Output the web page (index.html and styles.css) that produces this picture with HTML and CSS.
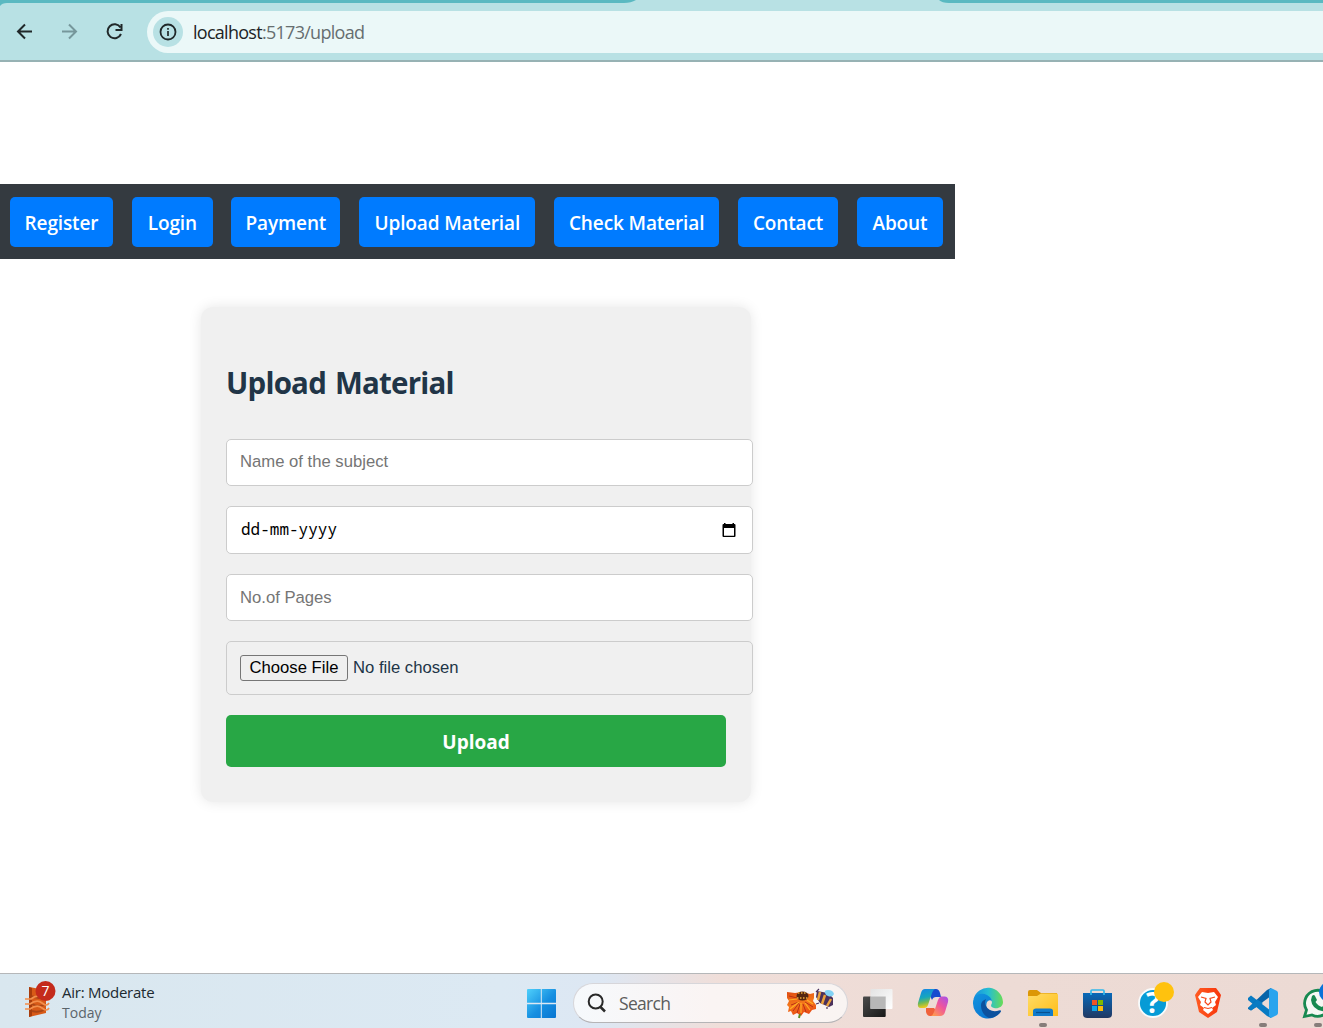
FILE: index.html
```html
<!DOCTYPE html>
<html lang="en">
<head>
<meta charset="utf-8">
<title>Upload Material</title>
<link rel="stylesheet" href="styles.css">
</head>
<body>
<header class="browser">
  <div class="tabs">
    <svg width="1323" height="10" viewBox="0 0 1323 10"><path fill="#5ab9c1" d="M0 0H636Q631 3 624 3H7Q2 3 0 6ZM939 0H1323V3H949Q942 3 939 0Z"/></svg>
  </div>
  <svg class="tools" width="147" height="50" viewBox="0 0 147 50" fill="none" stroke="#202829" stroke-width="2">
    <path d="M32 21.5H18M25 14.5L18 21.5L25 28.5"/>
    <path stroke="#76979b" d="M62 21.5H76M69 14.5L76 21.5L69 28.5"/>
    <path d="M120.5 17.5A7 7 0 1 0 121 24M121.5 14V20H115.500"/>
  </svg>
  <div class="address">
    <span class="info"><svg width="30" height="30" viewBox="0 0 30 30"><circle cx="15" cy="15" r="7.500" fill="none" stroke="#202829" stroke-width="1.800"/><path d="M15 14V19M15 11V12.700" stroke="#202829" stroke-width="1.700"/></svg></span>
    <span class="url"><b>localhost</b>:5173/upload</span>
  </div>
</header>
<main class="page">
  <nav class="nav">
    <a class="link register">Register</a>
    <a class="link login">Login</a>
    <a class="link payment">Payment</a>
    <a class="link upload">Upload Material</a>
    <a class="link check">Check Material</a>
    <a class="link contact">Contact</a>
    <a class="link about">About</a>
  </nav>
  <form class="card">
    <h1 class="title">Upload Material</h1>
    <input class="field" type="text" placeholder="Name of the subject">
    <div class="field date"><span>dd-mm-yyyy</span>
      <svg width="14" height="15" viewBox="0 0 14 15"><path fill="#000" fill-rule="evenodd" d="M2 0H3.500V1H10.500V0H12V1H12.500Q13.500 1 13.500 2V13Q13.500 14 12.500 14H1.500Q.5 14 .5 13V2Q.5 1 1.500 1H2ZM2 5V12.700H12V5Z"/></svg>
    </div>
    <input class="field pages" type="text" placeholder="No.of Pages">
    <div class="field file"><span class="choose">Choose File</span><span>No file chosen</span></div>
    <button class="submit" type="button">Upload</button>
  </form>
</main>
<footer class="taskbar">
  <div class="weather">
    <svg width="34" height="42" viewBox="0 0 34 42">
      <path fill="#d85a17" d="M6 8L23 11V34L6 38Z"/><path fill="#a83c0b" d="M6 8L9 9V37L6 38Z"/>
      <path fill="none" stroke="#a94616" stroke-width="2" d="M9 17Q16 21 23 17M9 25Q16 29 23 25M9 32Q16 34 23 30"/>
      <path fill="none" stroke="#f38f4b" stroke-width="1.700" d="M2 20H8Q14 15 20 19T27 19M2 25H7Q14 20 19 24T26 24M2 30H7Q14 25 19 29T26 29"/>
      <circle cx="22.500" cy="12" r="10" fill="#c42b1c"/>
      <text x="22.500" y="17" text-anchor="middle" fill="#fff" font-family="Open Sans, sans-serif" font-size="14">7</text>
    </svg>
    <div class="forecast"><span class="air">Air: Moderate</span><span class="today">Today</span></div>
  </div>
  <svg class="start" width="29" height="29" viewBox="0 0 29 29">
    <defs><linearGradient id="win" x2="1" y2="1"><stop stop-color="#4fd0fb"/><stop offset=".55" stop-color="#168fe1"/><stop offset="1" stop-color="#0875d1"/></linearGradient></defs>
    <path fill="url(#win)" d="M1 0H13.800V13.800H0V1Q0 0 1 0ZM14.800 0H28Q29 0 29 1V13.800H14.800ZM0 15.200H13.800V29H1Q0 29 0 28ZM14.800 15.200H29V28Q29 29 28 29H14.800Z"/>
  </svg>
  <div class="search">
    <svg width="20" height="20" viewBox="0 0 20 20" fill="none" stroke="#292929"><circle cx="8.700" cy="8.500" r="7" stroke-width="2"/><path d="M13.500 14L18 18.500" stroke-width="2.500"/></svg>
    <span class="hint">Search</span>
    <svg class="flower" width="50" height="32" viewBox="0 0 50 32">
      <defs><linearGradient id="petal" x2=".3" y2="1"><stop stop-color="#df4b12"/><stop offset=".55" stop-color="#f4781b"/><stop offset="1" stop-color="#e94b12"/></linearGradient></defs>
      <path fill="url(#petal)" d="M2 5L10 6L17 5L25 7L29 6L29 11L28 14L31 18L31 22L27 23L24 27L19 25L16 29L12 26L8 28L6 24L3 25L4 20L2 18L4 14L2 11Z"/>
      <path fill="none" stroke="#b92f16" d="M14 15L6 18M14 16L8 24M15 17L12 26M18 17L21 25M20 15L28 20M12 11L4 9"/>
      <path fill="none" stroke="#ffad24" stroke-width="1.200" d="M14 15L5 22M16 16L16 26M20 16L25 23M12 12L4 13M22 13L28 17"/>
      <ellipse cx="17.500" cy="9" rx="6" ry="4.500" fill="#562710"/><path stroke="#edaa3a" stroke-width="1.300" stroke-dasharray="1.500 1.500" d="M13 6H22M12 11H23"/>
      <path stroke="#5e8c23" stroke-width="2" d="M15 27L14 31"/>
      <path fill="#4a315c" d="M32 4L43 6L48 11L48 18L44 20L35 16L31 10Z"/>
      <path stroke="#eca23a" stroke-width="2.500" d="M35 5L33 13M40 8L37 17M46 12L42 19"/>
      <path fill="#83d3f5" d="M40 6Q39 3 43 3Q48 3 49 7Q48 10 44 9.500L41 8Z"/>
      <path stroke="#4a315c" stroke-width="1.200" d="M31 5L34 2M34 16L31 17M42 20L42 22"/>
    </svg>
  </div>
  <div class="apps">
    <svg viewBox="0 0 55 54"><defs><linearGradient id="dark" x2="1" y2="1"><stop stop-color="#4b4b4b"/><stop offset="1" stop-color="#181818"/></linearGradient><linearGradient id="light" x2="1" y2="1"><stop stop-color="#e3e3e3"/><stop offset="1" stop-color="#fff"/></linearGradient></defs><rect x="13" y="22.500" width="22.700" height="20.500" rx="1" fill="url(#dark)"/><rect x="20.500" y="15" width="22" height="20" rx="1" fill="url(#light)"/><path fill="#b8b8b8" d="M20.500 22.500H35.700V35H20.500Z"/></svg>
    <svg viewBox="0 0 55 54"><defs><linearGradient id="cpA" x2=".2" y2="1"><stop stop-color="#1584e8"/><stop offset=".5" stop-color="#16a7bd"/><stop offset=".75" stop-color="#72b957"/><stop offset="1" stop-color="#edc91c"/></linearGradient><linearGradient id="cpB" x1="1" x2=".2" y2="1"><stop stop-color="#a451ed"/><stop offset=".5" stop-color="#ee559d"/><stop offset="1" stop-color="#ff9851"/></linearGradient></defs>
      <path fill="#174bcf" d="M22 15H31Q34 15 35 19L36 23H31Q28 23 27 26Z"/><path fill="#f0613a" d="M21 34H29L33 39Q32 42 28 42H25Q22 42 21 38Z"/>
      <path fill="url(#cpA)" d="M20 15H30Q28 16 27 19L23 31Q22 34 19 34H16Q12 34 13 29L16 19Q17 15 20 15Z"/><path fill="url(#cpB)" d="M36 22.500H40Q44 23 43 28L40 38Q39 42 35 42H26Q28 41 29 38L33 26Q34 23 36 22.500Z"/></svg>
    <svg viewBox="0 0 55 54"><defs><linearGradient id="edA" x2="1"><stop stop-color="#168ee0"/><stop offset=".5" stop-color="#25bdd4"/><stop offset="1" stop-color="#69dc55"/></linearGradient><linearGradient id="edB" x2=".7" y2="1"><stop stop-color="#1294df"/><stop offset="1" stop-color="#0872cf"/></linearGradient></defs>
      <path fill="url(#edA)" d="M13.500 25A15 15 0 0 1 43 28C43 33 38 35 34 34C30 33 31 31 32 29C32 23 25 20 13.500 25Z"/><path fill="url(#edB)" d="M13 29C13 21 21 18 27 21Q31 23 32 27Q29 25 27 28C24 36 31 40 41 37A15 15 0 0 1 13 29Z"/><path fill="#0c519e" d="M21 31Q21 27 26 25Q24 29 26 32Q29 38 37 37Q43 35 40 39Q35 44 29 44C23 41 21 36 21 31Z"/></svg>
    <svg viewBox="0 0 55 54"><defs><linearGradient id="fold" x2="1" y2="1"><stop stop-color="#ffdc66"/><stop offset="1" stop-color="#ffbd18"/></linearGradient></defs><path fill="#dc9706" d="M13 18Q13 16 15 16H22L26 19H42V25H13Z"/><path fill="url(#fold)" d="M13 22H22L26 19.500H42Q43 19.500 43 21V42H13Z"/><path fill="#117bcb" d="M18 42V37Q18 34.500 21 34.500H35Q38 34.500 38 37V42Z"/><path stroke="#075191" stroke-width="1.200" d="M21 38.500H35"/><rect class="running" x="24" y="49" width="8" height="4" rx="2"/></svg>
    <svg viewBox="0 0 55 54"><defs><linearGradient id="shop" x2="0" y2="1"><stop stop-color="#0869b9"/><stop offset="1" stop-color="#213862"/></linearGradient></defs><path fill="url(#shop)" d="M13 19H42V40Q42 44 38 44H17Q13 44 13 40Z"/><path fill="none" stroke="#31b8ec" stroke-width="1.700" d="M21 21V17Q21 16 22 16H33Q34 16 34 17V21"/><path fill="#f35325" d="M22 26H27V31H22Z"/><path fill="#7eba00" d="M28 26H33V31H28Z"/><path fill="#10a4e8" d="M22 32H27V37H22Z"/><path fill="#ffbb09" d="M28 32H33V37H28Z"/></svg>
    <svg viewBox="0 0 55 54"><circle cx="28" cy="29" r="14" fill="#079bd6" stroke="#f8fbfc" stroke-width="1.800"/><text x="28" y="39" text-anchor="middle" font-family="Open Sans, sans-serif" font-size="29" font-weight="700" fill="#fff">?</text><circle cx="39" cy="18" r="10" fill="#ffc20e"/></svg>
    <svg viewBox="0 0 55 54"><defs><linearGradient id="brave" x2="1"><stop stop-color="#ff5b22"/><stop offset="1" stop-color="#f8350b"/></linearGradient></defs><path fill="url(#brave)" d="M20 14H36L39 18L41 21L40 25L37 38L28 44L19 38L16 25L15 21L17 18Z"/><path fill="#fff" d="M22 18L28 19L34 18L38 23L35 28L36 31L32 34L33 36L28 40L23 36L24 34L20 31L21 28L18 23Z"/><path fill="none" stroke="#f6471a" stroke-width="1.200" d="M21 23L26 24.500L25 28L28 31L31 28L30 24.500L35 23M24 33.500L28 34.500L32 33.500"/></svg>
    <svg viewBox="0 0 55 54"><path fill="#087bc3" d="M13 24L16 21.500L36 37V44L32 42L13 26Z"/><path fill="#0864a9" d="M13 34L32 16L36 14V22L16 36.500L13 35Z"/><path fill="#087bc3" d="M13 34L22 25.500L28 29L16 36.500Z"/><path fill="#29a4ee" d="M36 14L42 17Q43 18 43 19V39Q43 40 42 41L36 44L34 42V16Z"/><rect class="running" x="24" y="49" width="8" height="4" rx="2"/></svg>
    <svg viewBox="0 0 55 54"><path fill="#f6f8f4" stroke="#178950" stroke-width="2.800" d="M14.500 42.500L16.500 36A13 13 0 1 1 22 41Z"/><path fill="#178950" d="M22 22Q24 20 25 22L27 26L25.500 28Q28 32 32 33L34 31L38 33Q37 38 32 37Q22 35 21 26Z"/><circle cx="39" cy="18" r="10" fill="#0b72d9"/><rect class="running" x="24" y="49" width="8" height="4" rx="2"/></svg>
  </div>
</footer>
</body>
</html>
```
FILE: styles.css
```css
* { box-sizing: border-box; }
body { margin: 0; height: 1028px; overflow: hidden; display: flex; flex-direction: column; background: #fff; font-family: "Open Sans", "Noto Sans", sans-serif; }
svg { display: block; flex-shrink: 0; }
.browser { height: 62px; flex-shrink: 0; display: grid; grid-template: 10px 50px / 147px 1fr; background: #b8e1e4; border-bottom: 2px solid #97b2b4; }
.tabs { grid-column: 1 / 3; width: 1323px; }
.address { margin-top: 1px; height: 42px; padding-left: 6px; display: flex; align-items: center; border-radius: 21px 0 0 21px; background: #ebf8f8; }
.info { width: 30px; height: 30px; border-radius: 50%; background: #b8e1e4; }
.url { margin-left: 10px; color: #666e70; font: 18px/24px "Open Sans", sans-serif; letter-spacing: -.72px; }
.url b { font-weight: 400; color: #202425; }
.page { flex: 1; padding-top: 122px; }
.nav { width: 955px; height: 75px; padding: 13px 12px 12px 10px; display: flex; justify-content: space-between; background: #343a40; }
.link { height: 50px; border-radius: 5px; background: #007bff; color: #fff; font-size: 19px; font-weight: 600; line-height: 53px; text-align: center; white-space: nowrap; letter-spacing: -.12px; }
.register { width: 103px; }
.login { width: 81px; margin-right: -.4px; }
.payment { width: 109px; }
.upload { width: 176px; }
.check { width: 165px; }
.contact { width: 100px; }
.about { width: 86px; }
.card { width: 550px; height: 495px; margin: 48px 0 0 201px; padding: 53px 25px 35px; display: flex; flex-direction: column; gap: 20px; border-radius: 12px; background: #f0f0f0; box-shadow: 0 0 13px rgba(0, 0, 0, .1); }
.title { height: 59px; margin: 0; color: #213547; font-size: 29.5px; font-weight: 700; line-height: 45px; letter-spacing: -.78px; word-spacing: 2px; white-space: nowrap; }
.field { width: 527px; height: 47px; flex-shrink: 0; padding: 0 13px; border: 1px solid #ccc; border-radius: 5px; outline: 0; background: #fff; font: 16.67px "Liberation Sans", Arial, sans-serif; }
.field::placeholder { color: #757575; opacity: 1; }
input.field { padding-bottom: 2px; }
input.pages { padding-bottom: 0; }
.date { height: 48px; padding: 0 16px 0 14px; display: flex; align-items: center; justify-content: space-between; font: 16px "Noto Sans Mono", "DejaVu Sans Mono", monospace; }
.date span { padding-bottom: 2px; }
.file { height: 54px; display: flex; align-items: center; gap: 5px; background: #f0f0f0; color: #213547; }
.file span { white-space: nowrap; }
.choose { width: 108px; height: 26px; border: 1px solid #767676; border-radius: 3px; background: #efefef; color: #000; line-height: 23px; text-align: center; }
.submit { width: 500px; height: 52px; flex-shrink: 0; padding: 2px 0 0; border: 0; border-radius: 5px; background: #28a745; color: #fff; font: 700 19px "Open Sans", sans-serif; letter-spacing: 0; }
.taskbar { height: 55px; flex-shrink: 0; display: flex; border-top: 1px solid #b5b7b9; background: linear-gradient(90deg, #d9e7ef 0, #dce9f3 500px, #dde7f3 600px, #f0ded9 720px, #eddbd5 1000px, #ecdad4 1323px); }
.weather { width: 527px; flex-shrink: 0; padding: 5px 0 0 23px; display: flex; gap: 5px; }
.forecast { padding-top: 3px; display: flex; flex-direction: column; font-size: 15px; line-height: 20px; white-space: nowrap; letter-spacing: -.25px; }
.air { color: #202a30; }
.today { padding-top: 1px; color: #5a646a; font-size: 14px; letter-spacing: 0; }
.start { margin-top: 15px; }
.search { width: 275px; height: 40px; flex-shrink: 0; margin: 9px 0 0 17px; padding: 0 12px 0 13px; display: flex; align-items: center; border: 1px solid #d7d6da; border-bottom-color: #b5b4b6; border-radius: 20px; background: linear-gradient(90deg, #f6f9fc, #faf4f3 50%, #f9f4f2); }
.hint { margin-left: 12px; flex: 1; color: #5c5c5c; font-size: 17.5px; letter-spacing: -.7px; }
.apps { flex-shrink: 0; margin-left: 2px; display: flex; }
.apps svg { width: 55px; height: 54px; }
.running { fill: #867d7a; }
```
